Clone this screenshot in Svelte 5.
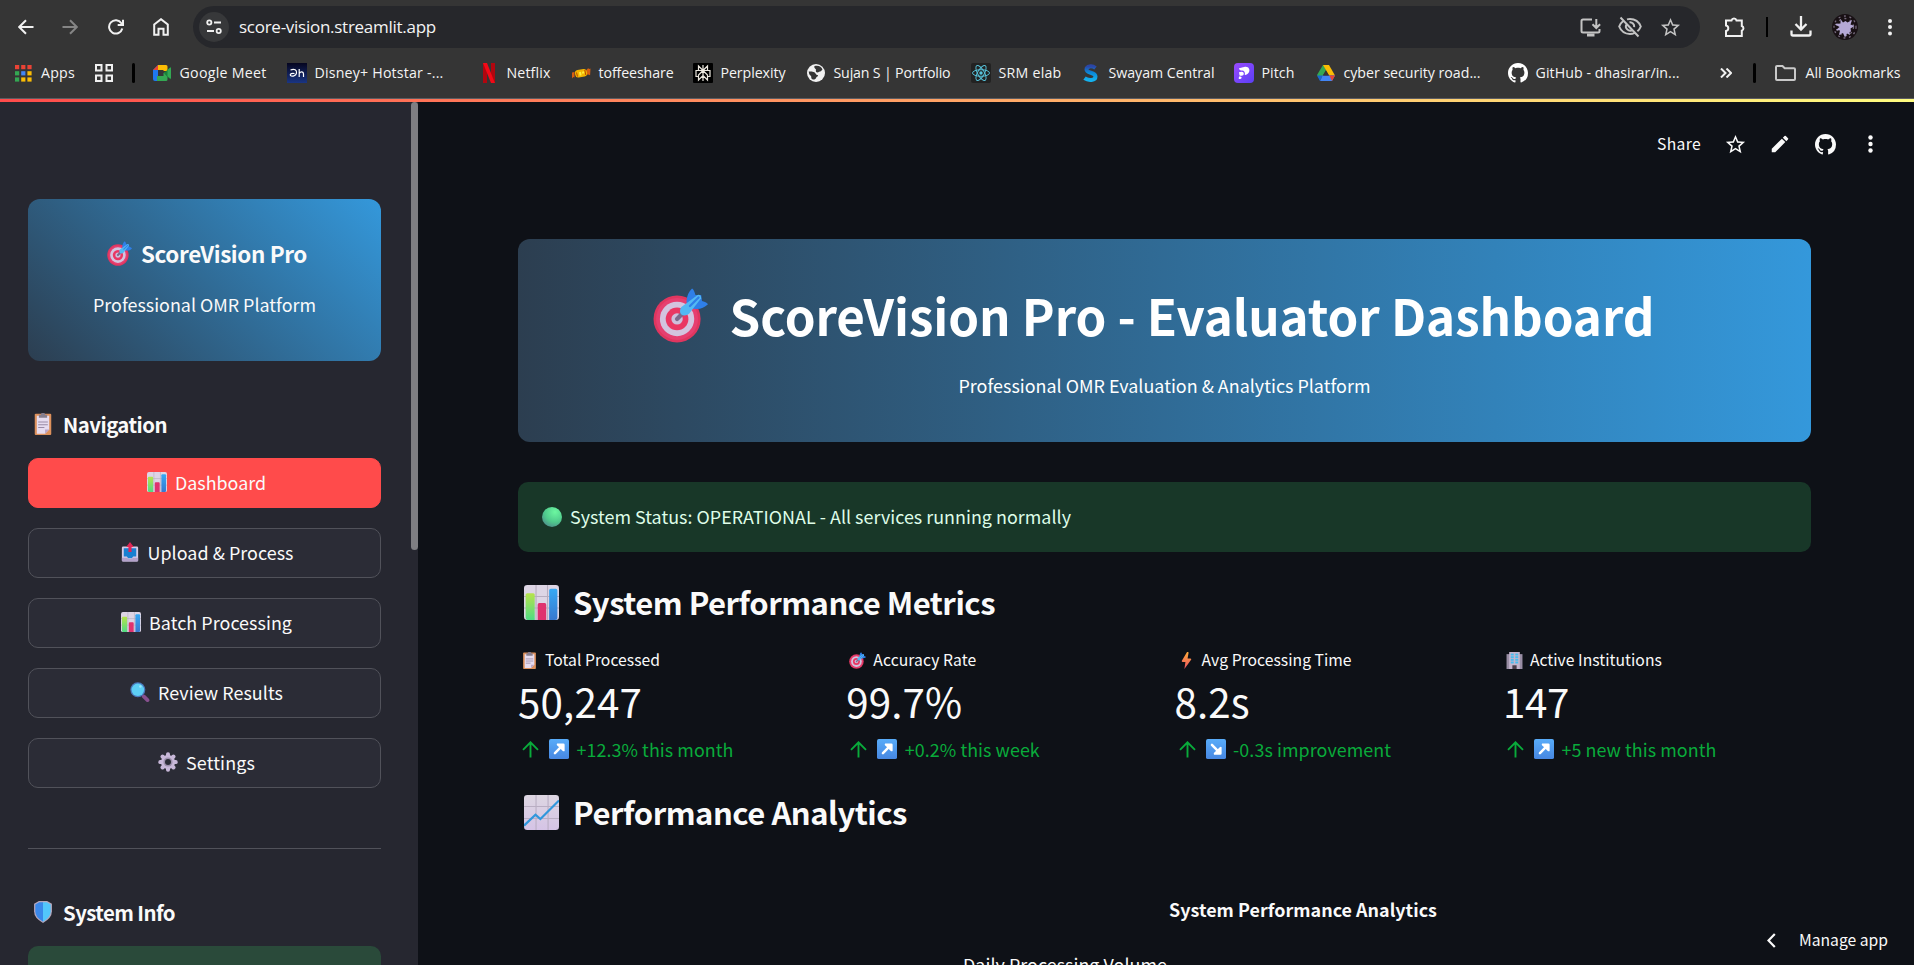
<script>
  // Tracks a single-line label out (or in) so that it fills the given width.
  function fit(node, width) {
    const natural = node.getBoundingClientRect().width;
    const n = node.textContent.length;
    node.style.letterSpacing = `${(width - natural) / n}px`;
  }

  const bookmarks = [
    { icon: 'meet', label: 'Google Meet', text: 87, width: 135 },
    { icon: 'hotstar', label: 'Disney+ Hotstar -...', text: 129, width: 192 },
    { icon: 'netflix', label: 'Netflix', text: 44, width: 92 },
    { icon: 'toffee', label: 'toffeeshare', text: 75, width: 122 },
    { icon: 'perplexity', label: 'Perplexity', text: 65, width: 113 },
    { icon: 'globe', label: 'Sujan S | Portfolio', text: 117, width: 165 },
    { icon: 'react', label: 'SRM elab', text: 63, width: 110 },
    { icon: 'swayam', label: 'Swayam Central', text: 106, width: 153 },
    { icon: 'pitch', label: 'Pitch', text: 33, width: 82 },
    { icon: 'drive', label: 'cyber security road...', text: 137, width: 192 },
    { icon: 'github', label: 'GitHub - dhasirar/in...', text: 144, width: 208 }
  ];

  const nav = [
    { icon: 'bars', label: 'Dashboard', w: 91, active: true },
    { icon: 'outbox', label: 'Upload & Process', w: 146 },
    { icon: 'bars', label: 'Batch Processing', w: 143 },
    { icon: 'search', label: 'Review Results', w: 125 },
    { icon: 'gear', label: 'Settings', w: 69 }
  ];

  const metrics = [
    { icon: 'clipboard', label: 'Total Processed', lw: 115, value: '50,247', vw: 124, delta: '+12.3% this month', dw: 157 },
    { icon: 'target', label: 'Accuracy Rate', lw: 103, value: '99.7%', vw: 116, delta: '+0.2% this week', dw: 135 },
    { icon: 'bolt', label: 'Avg Processing Time', lw: 150, value: '8.2s', vw: 75, delta: '-0.3s improvement', dw: 158 },
    { icon: 'building', label: 'Active Institutions', lw: 132, value: '147', vw: 66, delta: '+5 new this month', dw: 155 }
  ];
</script>

{#snippet github()}
  <path fill="currentColor" d="M8 0C3.58 0 0 3.58 0 8c0 3.54 2.29 6.53 5.47 7.59.4.07.55-.17.55-.38 0-.19-.01-.82-.01-1.49-2.01.37-2.53-.49-2.69-.94-.09-.23-.48-.94-.82-1.13-.28-.15-.68-.52-.01-.53.63-.01 1.08.58 1.23.82.72 1.21 1.87.87 2.33.66.07-.52.28-.87.51-1.07-1.78-.2-3.64-.89-3.64-3.95 0-.87.31-1.59.82-2.15-.08-.2-.36-1.02.08-2.12 0 0 .67-.21 2.2.82.64-.18 1.32-.27 2-.27s1.36.09 2 .27c1.53-1.04 2.2-.82 2.2-.82.44 1.1.16 1.92.08 2.12.51.56.82 1.27.82 2.15 0 3.07-1.87 3.75-3.65 3.95.29.25.54.73.54 1.48 0 1.07-.01 1.93-.01 2.2 0 .21.15.46.55.38A8.01 8.01 0 0 0 16 8c0-4.42-3.58-8-8-8z" />
{/snippet}

{#snippet star()}
  <path fill="currentColor" d="M22 9.24l-7.19-.62L12 2 9.19 8.63 2 9.24l5.46 4.73L5.82 21 12 17.27 18.18 21l-1.63-7.03L22 9.24zM12 15.4l-3.76 2.27 1-4.28-3.32-2.88 4.38-.38L12 6.1l1.71 4.04 4.38.38-3.32 2.88 1 4.28L12 15.4z" />
{/snippet}

{#snippet favicon(name)}
  <svg class="fav" viewBox="0 0 20 20">
    {#if name === 'meet'}
      <path fill="#1f78f0" d="M1 7l5-5v16H3a2 2 0 0 1-2-2z" /><path fill="#ea4335" d="M1 7l5-5v5z" /><path fill="#fbbc04" d="M6 2h8a1.500 1.500 0 0 1 1.500 1.500V8H11.500V7H6z" /><path fill="#34a853" d="M5 13h6.500v-3l4-2v8.500A1.500 1.500 0 0 1 14 18H5z" /><path fill="#188038" d="M12 10l6-5.500q1-.5 1 .5v10.500q0 1-1 .5l-3-2.500z" /><path fill="#34a853" d="M15.500 7l2.500-2.200q1-.6 1 .5v9.600q0 1-1 .3l-2.500-2z" />
    {:else if name === 'hotstar'}
      <defs><linearGradient id="hs" x1="0" y1="0" x2="0" y2="1"><stop offset="0" stop-color="#05051f" /><stop offset="1" stop-color="#1a3583" /></linearGradient></defs>
      <rect width="20" height="20" fill="url(#hs)" />
      <path fill="none" stroke="#fff" stroke-width="1.200" d="M3.500 7c4-1.500 6.500 0 6 3.200-.5 2.800-4.500 3.600-6 2.300-1-2 2-2.500 4-2M12.200 6V14M12.200 10.500c1.500-2.500 4.300-2.200 4.300.5v3" />
    {:else if name === 'netflix'}
      <path fill="#b1060f" d="M4 0h4v20l-4 .3zM12 0h4v20.300l-4-.3z" /><path fill="#f20a17" d="M4 0h4l8 20.300-4-.4z" />
    {:else if name === 'toffee'}
      <path fill="#d95f10" d="M1 9.500l2.500-.5v5.500l-1.200-.4L1 15.500zM19.500 5.500l-1.200.6-1.200-.8-2 2v4.700l2-.5 2 .8z" /><rect x="4" y="6.500" width="12" height="7.500" rx="3" transform="rotate(-10 10 10)" fill="#f3b400" /><path stroke="#b84800" stroke-width="1" d="M5.500 9.500l1 4M13.800 7l1 5" /><path stroke="#ffef40" stroke-width="2" d="M9 9l.6 3.500M12 8.500l.3 2" />
    {:else if name === 'perplexity'}
      <rect width="20" height="20" rx="1" fill="#000" /><path fill="none" stroke="#ece8df" stroke-width="1.200" d="M10 2v16M10 7.500L5.500 3v4.500h9V3L10 7.500l-4.500 4.500v5L10 12.500l4.500 4.500v-5L10 7.500M5.500 13.500H3v-6h14v6h-2.500" />
    {:else if name === 'globe'}
      <circle cx="10" cy="10" r="9" fill="#f2f2f2" /><path fill="#353535" d="M8.500 3c4-1.200 7 .8 8 3.500-1 .5-1 2-2.500 2s-1 1-2.500 1-2-1.500-1.500-2.500S7.500 5.500 8.500 3zM2.700 8.500C5 8.500 8.500 8.500 9.500 10.500s2 1 2.500 2-1.500 1-2 2.500-2.500 2-4 1 0-2.500-1.500-3.500-1.500-2.500-1.800-4z" />
    {:else if name === 'react'}
      <rect width="20" height="20" rx="2" fill="#222" /><g fill="none" stroke="#58c4dc" stroke-width=".95"><ellipse cx="10" cy="10" rx="8.500" ry="3.300" /><ellipse cx="10" cy="10" rx="8.500" ry="3.300" transform="rotate(60 10 10)" /><ellipse cx="10" cy="10" rx="8.500" ry="3.300" transform="rotate(120 10 10)" /></g><circle cx="10" cy="10" r="1.700" fill="#58c4dc" />
    {:else if name === 'swayam'}
      <defs><linearGradient id="sw" x1="0" y1="0" x2="0" y2="1"><stop offset="0" stop-color="#2b45a5" /><stop offset=".45" stop-color="#0b86d6" /><stop offset="1" stop-color="#14b1ee" /></linearGradient></defs>
      <path fill="none" stroke="url(#sw)" stroke-width="4" d="M14.500 5C11 2.300 5.500 3 5.500 6.500c0 4 9 2.500 9 7 0 4-7 4.500-11 1.700" />
    {:else if name === 'pitch'}
      <defs><linearGradient id="pt" x1="0" y1="0" x2="1" y2="1"><stop offset="0" stop-color="#9a4bff" /><stop offset="1" stop-color="#5a3ff5" /></linearGradient></defs>
      <rect width="20" height="20" rx="4" fill="url(#pt)" /><path fill="#fff" d="M5 5.200l6-1.400c3.500-.6 5.500 2.800 3.800 5.700-1 1.800-2.600 2.500-4 2.400.6-2.600-.8-4.400-2.600-4.400C6.500 7.500 5 7 5 5.200zM5 9.300c3-1 4.800-.5 4.800 1.500 0 1.700-1.700 2.300-4.300 1.600zM5 13.600c2-.6 3 .3 2.500 1.500-.5 1.100-2.600 1.300-2.800.3z" />
    {:else if name === 'drive'}
      <path fill="#34a853" d="M7 2h6l-6.500 11L4 17 1 12z" /><path fill="#188038" d="M7 2h6l-3 5z" /><path fill="#fbbc04" d="M7 2h6l6 10.500h-6z" /><path fill="#4285f4" d="M6.500 12.500H19L16 18H4z" /><path fill="#1967d2" d="M1 12.500h5.700L4 18z" /><path fill="#ea4335" d="M13.300 12.500H19L16 18z" /><path fill="#353535" d="M10 7.400l3 5.200H7z" />
    {:else if name === 'github'}
      <g transform="scale(1.250)" color="#fff">{@render github()}</g>
    {/if}
  </svg>
{/snippet}

{#snippet emoji(name, cls)}
  <svg class="emoji {cls}" viewBox="0 0 32 32">
    {#if name === 'target'}
      <circle cx="14" cy="18" r="13.700" fill="#e0365f" /><circle cx="14" cy="18" r="12.200" fill="#e63f70" /><circle cx="14" cy="18" r="10" fill="#d3c4df" /><circle cx="14" cy="18" r="6.600" fill="#ea3763" /><circle cx="14" cy="18" r="3.300" fill="#cdbfdc" />
      <path d="M14 18l4-4" stroke="#7b6a8c" stroke-width="2.500" stroke-linecap="round" /><path fill="#2f7fe8" d="M19.500 8.500c0-4 1.500-6.500 3.200-8.200q.8 0 2 3.700l3.300 0 .5 3.500q3 .8 3.500 2c-2.500 2.500-5.500 3.200-8.500 2.500z" /><path fill="#53b9f3" d="M16.500 11L26 4q2-.3 2 2L21 15q-2.500 2-4.700.2-1.300-2 .2-4.200z" /><path stroke="#2f7fe8" stroke-width="1.300" stroke-linecap="round" d="M21.500 10.500l5-5" />
    {:else if name === 'clipboard'}
      <rect x="4" y="1" width="24" height="31" rx="1.500" fill="#dd915c" /><path fill="#e6dcef" d="M7 4h18v20l-6 6H7z" /><path fill="#b9a5c8" d="M25 24h-6v6z" /><path fill="#857d8d" d="M10 2.500h3a3 3 0 0 1 6 0h3V7H10z" /><path stroke="#998ba7" stroke-width="1.500" d="M9 13h14M9 17h14M9 21h9" />
    {:else if name === 'bars'}
      <defs><linearGradient id="gb" x1="0" y1="0" x2="0" y2="1"><stop offset="0" stop-color="#b7e34c" /><stop offset="1" stop-color="#50db84" /></linearGradient><linearGradient id="bb" x1="0" y1="0" x2="0" y2="1"><stop offset="0" stop-color="#37a9f4" /><stop offset="1" stop-color="#3878cf" /></linearGradient></defs>
      <rect width="32" height="32" rx="3" fill="#ddd5e5" /><path stroke="#b7adc0" stroke-width="1" d="M11 0v32M21.500 0v32M0 10.500h32M0 21h32" /><path fill="url(#gb)" d="M1.500 9q0-1.500 1.500-1.500h5.500q1.300 0 1.300 1.500v23H3q-1.500-.5-1.500-2z" /><path fill="#df326f" d="M12.500 18q0-1.500 1.500-1.500h5q1.300 0 1.300 1.500v14h-7.800z" /><path fill="url(#bb)" d="M23 5q0-1.500 1.500-1.500H29q1.500 0 1.500 1.500v25q0 2-2 2H23z" />
    {:else if name === 'line'}
      <defs><linearGradient id="lc" x1="0" y1="0" x2="0" y2="1"><stop offset="0" stop-color="#ddd6e2" /><stop offset="1" stop-color="#d5c4e6" /></linearGradient></defs>
      <rect width="32" height="32" rx="3" fill="url(#lc)" /><path stroke="#b9aec3" stroke-width="1" d="M11 0v32M22 0v32M0 10.500h32M0 21.500h32" /><path fill="none" stroke="#3097dc" stroke-width="2" d="M0 28l10.500-10 4.500 4L32 5" />
    {:else if name === 'outbox'}
      <path fill="#d8cbe6" d="M5 7h22q2 0 2 2v20q0 2-2 2H5q-2 0-2-2V9q0-2 2-2z" /><path fill="#b3a1ca" d="M3 25h8l3 2h4l3-2h8v4q0 2-2 2H5q-2 0-2-2z" /><path fill="#197fd0" d="M6 10h20v13h-5l-2 3h-6l-2-3H6z" /><path fill="#e12657" d="M16 0l5.500 7q0 1-1 1H18.500v8h-5V8h-2q-1 0-1-1z" />
    {:else if name === 'search'}
      <path stroke="#87508e" stroke-width="6" stroke-linecap="round" d="M22 23l6 6" /><circle cx="12.500" cy="12.500" r="12" fill="#4b79bd" /><circle cx="12.500" cy="12.500" r="10" fill="#5dcff5" /><circle cx="16.500" cy="7" r="2" fill="#9ce8fb" />
    {:else if name === 'gear'}
      <g fill="#c8b8d9"><circle cx="16" cy="16" r="11.300" />{#each [0, 45, 90, 135] as a}<rect x="12.800" y=".5" width="6.400" height="31" rx="3" transform="rotate({a} 16 16)" />{/each}</g><circle cx="16" cy="16" r="7.300" fill="#9d90ad" /><circle cx="16" cy="16" r="4.800" fill="#2b2c36" />
    {:else if name === 'shield'}
      <path fill="#b5a7bd" d="M10 0h12l7 4v11q0 10-13 17Q3 25 3 15V4z" /><path fill="#3a88ea" d="M16 1.800h-5.500L4.800 5v10q0 9 11.200 15z" /><path fill="#52c6fb" d="M16 1.800h5.500L27.200 5v10q0 9-11.200 15z" />
    {:else if name === 'dot'}
      <defs><radialGradient id="gd" cx=".65" cy=".25" r=".85"><stop offset="0" stop-color="#6cf7a0" /><stop offset=".6" stop-color="#4fc98c" /><stop offset="1" stop-color="#4e878c" /></radialGradient></defs>
      <circle cx="16" cy="16" r="16" fill="url(#gd)" />
    {:else if name === 'bolt'}
      <defs><linearGradient id="bo" x1="0" y1="0" x2="0" y2="1"><stop offset="0" stop-color="#ffad38" /><stop offset="1" stop-color="#ed5164" /></linearGradient></defs>
      <path fill="url(#bo)" d="M17 0L7 17q0 2 2 2h5l-2 13 13-18q0-2-2-2h-5l2-11q-2-2-3-1z" />
    {:else if name === 'building'}
      <rect x="1" y="4" width="30" height="28" fill="#988da4" /><rect x="6" y="0" width="20" height="32" fill="#c3b5ce" /><g fill="#45bdf0">{#each [3, 8, 13, 18] as y}<rect x="9" {y} width="5.500" height="3.500" /><rect x="17.500" {y} width="5.500" height="3.500" />{/each}</g><rect x="12" y="25" width="8" height="7" fill="#473c4a" />
    {:else if name === 'up' || name === 'down'}
      <defs><linearGradient id="ab" x1="0" y1="0" x2="0" y2="1"><stop offset="0" stop-color="#58acf9" /><stop offset="1" stop-color="#4787e2" /></linearGradient></defs>
      <rect width="32" height="32" rx="3" fill="url(#ab)" />
      <g transform={name === 'down' ? 'rotate(90 16 16)' : undefined}><path stroke="#fff" stroke-width="4" stroke-linecap="round" d="M9.500 22.500l9-9" /><path fill="#fff" d="M13 7h10q2 0 2 2v10q-1.500 1.500-3 0L13 10q-1.500-1.500 0-3z" /></g>
    {/if}
  </svg>
{/snippet}

<div class="window">
  <header class="chrome">
    <div class="toolbar">
      <svg class="back" viewBox="0 0 16 16"><path d="M15.500 8H2M8 1.200L1.200 8 8 14.800" /></svg>
      <svg class="forward" viewBox="0 0 16 16"><path d="M.5 8H14M8 1.200L14.800 8 8 14.800" /></svg>
      <svg class="reload" viewBox="0 0 16 16"><path d="M14.300 9.500A6.700 6.700 0 1 1 13.400 4.200l1.300 1.600M15 .8v5.300H9.700" /></svg>
      <svg class="home" viewBox="0 0 16 18"><path d="M1.200 6.500L8 1.200l6.800 5.300v10.300h-4.300v-6h-5v6H1.200z" /></svg>
      <div class="omnibox">
        <div class="tune">
          <svg viewBox="0 0 16 16"><circle cx="3.300" cy="3.500" r="2.100" /><path d="M8 3.500h7M1 12h7" /><circle cx="12.700" cy="12" r="2.100" /></svg>
        </div>
        <div class="url"><span use:fit={197}>score-vision.streamlit.app</span></div>
        <svg class="install" viewBox="0 0 21 19"><path d="M12 1.500H3q-1.500 0-1.500 1.500v10q0 1.500 1.500 1.500h15q1.500 0 1.500-1.500v-2M16.300 1v8.500M12.500 6.200l3.800 3.800 3.800-3.800" /><path d="M7 17h7.500" stroke-width="3" /></svg>
        <svg class="eye" viewBox="0 0 24 22"><path d="M5.500 4.700C3.500 6.200 2 8.300 1.200 10.500 3 15 7.200 18 12 18c1.700 0 3.300-.4 4.700-1.100M9 3.400C10 3.100 11 3 12 3c4.800 0 9 3 10.800 7.500-.7 1.800-1.900 3.500-3.400 4.700M8.700 8a4.300 4.300 0 0 0 5.900 6M11.500 6.300a4.300 4.300 0 0 1 4.700 4.800M2.500 1.500L20.500 20.500" /></svg>
        <svg class="fav-star" viewBox="0 0 24 24">{@render star()}</svg>
      </div>
      <svg class="puzzle" viewBox="0 0 22 22"><path d="M2 4.500h5.500a2.600 2.600 0 0 1 5 0h5.300V10a2.500 2.500 0 0 1 0 4.700V20H2v-5a2.800 2.800 0 0 0 0-5.500z" /></svg>
      <i class="bar-sep"></i>
      <svg class="download" viewBox="0 0 22 22"><path d="M11 0v13M5.500 8l5.500 5.500L16.500 8M1.500 14.500v3.500q0 1.500 1.500 1.500h16q1.500 0 1.500-1.500v-3.500" /></svg>
      <svg class="avatar" viewBox="0 0 26 26"><circle cx="13" cy="13" r="13" fill="#181014" /><g fill="none" stroke="#756a7c" stroke-width="1.300" stroke-dasharray="2 3.600"><circle cx="13" cy="13" r="11" /><circle cx="13" cy="13" r="8.500" /></g><path fill="#b5a9d6" d="M8.500 5l2.500 3.500L13.500 7l2 1.500L20 6l-1.500 4.500 4 1.500-4 2.500.5 3-1.500.5.500 3-3-1.500-2 4-2-4.500-4 2 1-4.500-4-.5 3.500-3-5-3 6-.500z" /></svg>
      <svg class="dots" viewBox="0 0 4 18"><circle cx="2" cy="3" r="2" /><circle cx="2" cy="9" r="2" /><circle cx="2" cy="15.500" r="2" /></svg>
    </div>
    <nav class="bookmarks">
      <svg class="apps" viewBox="0 0 17 17">
        {#each ['#ea4335', '#ea4335', '#ea4335', '#34a853', '#4285f4', '#fbbc04', '#34a853', '#fbbc04', '#fbbc04'] as c, i}
          <rect x={(i % 3) * 6.2} y={Math.floor(i / 3) * 6.2} width="4.200" height="4.200" fill={c} />
        {/each}
      </svg>
      <span class="apps-label"><span use:fit={34}>Apps</span></span>
      <svg class="grid" viewBox="0 0 18 18"><path d="M1 1h5.500v5.500H1zM11.500 1H17v5.500h-5.500zM1 11.500h5.500V17H1zM11.500 11.500H17V17h-5.500z" /></svg>
      <i class="mark-sep"></i>
      {#each bookmarks as b}
        <a class="bookmark" style:width="{b.width}px">{@render favicon(b.icon)}<span use:fit={b.text}>{b.label}</span></a>
      {/each}
      <svg class="more" viewBox="0 0 12 10"><path d="M1 .5L5.500 5 1 9.500M6.500 .5L11 5 6.500 9.500" /></svg>
      <i class="mark-sep end"></i>
      <svg class="folder" viewBox="0 0 21 16"><path d="M1 2q0-1 1-1h5.500l2.200 2.300H19q1 0 1 1V14q0 1-1 1H2q-1 0-1-1z" /></svg>
      <span use:fit={95}>All Bookmarks</span>
    </nav>
    <div class="rainbow"></div>
  </header>

  <div class="app">
    <aside>
      <section class="brand">
        <h3>{@render emoji('target', 'e25')}<span use:fit={166}>ScoreVision Pro</span></h3>
        <p><span use:fit={223}>Professional OMR Platform</span></p>
      </section>
      <h4>{@render emoji('clipboard', 'e22')}<span use:fit={104}>Navigation</span></h4>
      <div class="nav">
        {#each nav as n}
          <button class:active={n.active}>{@render emoji(n.icon, 'e20')}<span use:fit={n.w}>{n.label}</span></button>
        {/each}
      </div>
      <hr />
      <h4>{@render emoji('shield', 'e22')}<span use:fit={112}>System Info</span></h4>
      <div class="info"></div>
      <div class="thumb"></div>
    </aside>

    <main>
      <div class="actions">
        <span use:fit={44}>Share</span>
        <svg class="a-star" viewBox="0 0 24 24">{@render star()}</svg>
        <svg class="a-pen" viewBox="0 0 24 24"><path fill="currentColor" d="M3 17.250V21h3.750L17.810 9.940l-3.750-3.750zM20.710 7.040a1 1 0 0 0 0-1.410l-2.340-2.340a1 1 0 0 0-1.410 0l-1.830 1.830 3.750 3.750z" /></svg>
        <svg class="a-git" viewBox="0 0 16 16">{@render github()}</svg>
        <svg class="a-dots" viewBox="0 0 5 18"><circle cx="2.500" cy="2.500" r="2.200" /><circle cx="2.500" cy="9" r="2.200" /><circle cx="2.500" cy="15.500" r="2.200" /></svg>
      </div>

      <section class="hero">
        <h1>{@render emoji('target', 'e55')}<span use:fit={925}>ScoreVision Pro - Evaluator Dashboard</span></h1>
        <p><span use:fit={412}>Professional OMR Evaluation &amp; Analytics Platform</span></p>
      </section>

      <div class="status">{@render emoji('dot', 'e20')}<span use:fit={501}>System Status: OPERATIONAL - All services running normally</span></div>

      <h2>{@render emoji('bars', 'e35')}<span use:fit={422}>System Performance Metrics</span></h2>
      <div class="metrics">
        {#each metrics as m}
          <div class="metric">
            <div class="label">{@render emoji(m.icon, 'e17')}<span use:fit={m.lw}>{m.label}</span></div>
            <div class="value"><span use:fit={m.vw}>{m.value}</span></div>
            <div class="delta">
              <svg class="arrow" viewBox="0 0 17 17"><path d="M8.500 16.500V2M1 8.800L8.500 1.300l7.500 7.500" /></svg>
              {@render emoji(m.icon === 'bolt' ? 'down' : 'up', 'e20')}
              <span use:fit={m.dw}>{m.delta}</span>
            </div>
          </div>
        {/each}
      </div>

      <h2>{@render emoji('line', 'e35')}<span use:fit={334}>Performance Analytics</span></h2>
      <div class="chart">
        <div class="chart-title"><span use:fit={268}>System Performance Analytics</span></div>
        <div class="chart-sub"><span use:fit={204}>Daily Processing Volume</span></div>
      </div>
      <div class="manage">
        <svg viewBox="0 0 9 15"><path d="M7.800 1L1.500 7.500l6.300 6.500" /></svg>
        <span use:fit={89}>Manage app</span>
      </div>
    </main>
  </div>
</div>

<style>
  :global(body) { margin: 0; overflow: hidden; background: #0e1117; }
  .window { width: 1914px; height: 965px; overflow: hidden; display: flex; flex-direction: column; color: #fafafa; font-family: 'Noto Sans CJK SC', sans-serif; }
  svg { display: block; flex: none; }
  span { white-space: nowrap; flex: none; }
  h1, h2, h3, h4, p { margin: 0; font-weight: 700; }
  h1 > span, h2 > span, h3 > span, h4 > span, p > span, .value > span, .url > span, .chart span, .apps-label > span { display: inline-block; }

  .chrome { height: 102px; background: #353535; font-family: 'Open Sans', 'Noto Sans', sans-serif; color: #f4f4f4; flex: none; }
  .toolbar { height: 54px; display: flex; align-items: center; }
  .toolbar svg, .grid, .more, .folder { fill: none; stroke: #f1f1f1; stroke-width: 2; }
  .back { width: 16px; height: 16px; margin-left: 18px; }
  .toolbar .forward { width: 16px; height: 16px; margin-left: 28px; stroke: #858585; }
  .reload { width: 16px; height: 16px; margin-left: 30px; }
  .home { width: 16px; height: 18px; margin-left: 29px; }
  .omnibox { margin-left: 24px; width: 1507px; height: 42px; border-radius: 21px; background: #26272b; display: flex; align-items: center; box-sizing: border-box; padding-left: 6px; flex: none; }
  .tune { width: 30px; height: 30px; border-radius: 50%; background: #37383a; display: flex; align-items: center; justify-content: center; }
  .tune svg { width: 16px; height: 16px; stroke-width: 1.8; }
  .url { margin-left: 10px; width: 1341px; font-size: 17px; line-height: 24px; }
  .toolbar .install, .toolbar .eye { stroke: #c3c3c3; }
  .install { width: 21px; height: 19px; }
  .eye { width: 24px; height: 22px; margin-left: 17px; }
  .toolbar .fav-star { width: 23px; height: 23px; margin-left: 17px; stroke: none; color: #c3c3c3; }
  .puzzle { width: 22px; height: 22px; margin-left: 24px; }
  .bar-sep { width: 2px; height: 20px; background: #000; margin-left: 20px; }
  .toolbar .download { width: 22px; height: 22px; margin-left: 22px; stroke-width: 2.3; }
  .toolbar .avatar { width: 26px; height: 26px; margin-left: 20px; stroke: none; }
  .toolbar .dots { width: 4px; height: 18px; margin-left: 30px; fill: #f1f1f1; stroke: none; }

  .bookmarks { height: 38px; margin-bottom: 6px; display: flex; align-items: center; font-size: 14.2px; line-height: 20px; }
  .apps { width: 17px; height: 17px; margin-left: 15px; }
  .apps-label { margin-left: 9px; width: 54px; }
  .grid { width: 18px; height: 18px; }
  .mark-sep { width: 3px; height: 20px; border-radius: 2px; background: #000; margin: 0 17px 0 19px; flex: none; }
  .bookmark { display: flex; align-items: center; gap: 7.500px; flex: none; }
  .fav { width: 20px; height: 20px; }
  .more { width: 12px; height: 10px; margin-left: 4px; }
  .mark-sep.end { margin: 0 19px 0 21px; }
  .folder { width: 21px; height: 16px; margin-right: 9.5px; stroke: #c9c9c9; }
  .rainbow { height: 3px; border-top: 1px solid #5c5c61; background: linear-gradient(90deg, #ff4b4b, #fffd80); }

  .app { flex: 1; display: flex; min-height: 0; }
  aside { position: relative; width: 418px; box-sizing: border-box; padding: 97px 37px 0 28px; background: #262730; flex: none; overflow: hidden; }
  .thumb { position: absolute; right: 0; top: 0; width: 7px; height: 448px; border-radius: 4px; background: #7e7e82; }
  .brand { height: 162px; box-sizing: border-box; padding-top: 39px; border-radius: 12px; background: linear-gradient(45deg, #2c3e50, #3498db); text-align: center; }
  h3 { display: flex; justify-content: center; align-items: center; gap: 9px; padding-left: 5px; height: 30px; font-size: 22.4px; line-height: 30px; }
  p { font-size: 17.9px; line-height: 30px; font-weight: 400; }
  .brand p { margin-top: 21px; }
  h4 { display: flex; align-items: center; height: 30px; gap: 9px; padding-left: 4px; margin-top: 48px; font-size: 20.4px; line-height: 30px; }
  .nav { margin-top: 19px; display: flex; flex-direction: column; gap: 20px; }
  button { height: 50px; border: 1px solid #51525a; border-radius: 10px; background: #2b2c36; color: #fafafa; font: 400 17.9px/28px 'Noto Sans CJK SC', sans-serif; display: flex; align-items: center; justify-content: center; gap: 8px; padding: 0 0 2px 4px; }
  button.active { background: #ff4b4b; border-color: #ff4b4b; }
  hr { border: 0; height: 1px; background: #51525a; margin: 60px 0 0; }
  .info { margin-top: 19px; height: 60px; border-radius: 10px; background: #2a4a3a; }

  .e17 { width: 17px; height: 17px; }
  .e20 { width: 20px; height: 20px; }
  .e22 { width: 22px; height: 22px; }
  .e25 { width: 25px; height: 25px; }
  .e35 { width: 35px; height: 35px; }
  .e55 { width: 55px; height: 55px; }

  main { position: relative; flex: 1; min-width: 0; overflow: hidden; padding: 0 103px 0 100px; background: #0e1117; }
  .actions { height: 84px; margin-right: -67px; margin-bottom: 53px; display: flex; align-items: center; justify-content: flex-end; font-size: 15.7px; }
  .actions span { margin-top: -2px; }
  .a-star { width: 23px; height: 23px; margin-left: 23px; }
  .a-pen { width: 22px; height: 22px; margin-left: 22px; }
  .a-git { width: 21px; height: 21px; margin-left: 24px; }
  .a-dots { width: 5px; height: 18px; margin: 0 5px 0 32px; fill: currentColor; }

  .hero { height: 203px; box-sizing: border-box; padding-top: 43px; border-radius: 12px; background: linear-gradient(90deg, #2c3e50, #3498db); text-align: center; color: #fff; }
  h1 { display: flex; justify-content: center; align-items: center; gap: 22px; padding-right: 22px; height: 66px; font-size: 49.3px; line-height: 66px; }
  .hero p { margin-top: 22px; }
  .status { margin-top: 40px; height: 69px; padding-bottom: 1px; padding-left: 24px; border-radius: 10px; background: #183728; color: #dffde9; display: flex; align-items: center; gap: 8px; font-size: 17.9px; line-height: 28px; }
  .status span { margin-top: -1px; }
  h2 { display: flex; align-items: center; gap: 14px; height: 42px; padding-left: 6px; margin-top: 29px; font-size: 31px; line-height: 42px; font-weight: 700; }
  .metrics { margin-top: 25px; display: grid; grid-template-columns: repeat(4, 308.300px); column-gap: 20px; }
  .label { display: flex; align-items: center; gap: 7px; padding-left: 3px; height: 24px; font-size: 15.7px; line-height: 24px; }
  .value { height: 54px; margin-top: 2px; font-size: 40.3px; line-height: 54px; font-weight: 400; }
  .delta { display: flex; align-items: center; height: 30px; margin-top: 6px; padding-left: 4px; color: #09ab3b; font-size: 17.9px; line-height: 30px; }
  .arrow { width: 17px; height: 17px; margin-right: 10px; fill: none; stroke: currentColor; stroke-width: 1.9; }
  .delta span { margin-left: 7.5px; }
  .metrics + h2 { margin-top: 27px; }
  .chart-title { margin-top: 61px; padding-left: 651px; font-size: 17.9px; line-height: 30px; font-weight: 700; }
  .chart-sub { margin-top: 25px; padding-left: 445px; font-size: 17.9px; line-height: 30px; }
  .manage { position: absolute; right: 26px; bottom: 10px; display: flex; align-items: center; height: 30px; gap: 23px; font-size: 15.7px; }
  .manage svg { width: 9px; height: 15px; fill: none; stroke: currentColor; stroke-width: 2.2; }
  .manage span { margin-top: -2px; }
</style>
